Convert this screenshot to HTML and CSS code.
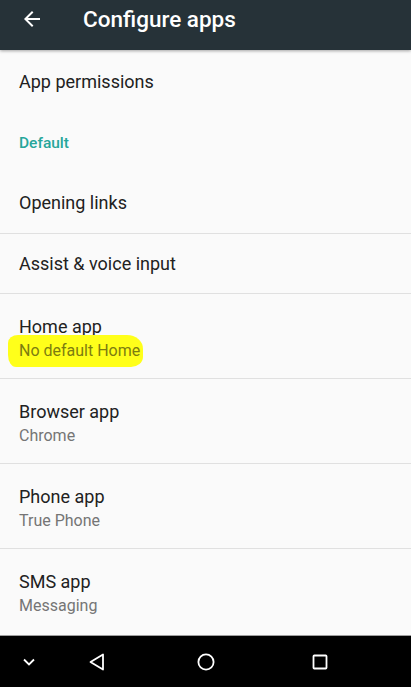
FILE: index.html
```html
<!DOCTYPE html>
<html lang="en">
<head>
  <meta charset="UTF-8">
  <meta name="viewport" content="width=device-width, initial-scale=1.0">
  <title>Configure apps</title>
  <link rel="stylesheet" href="styles.css">
</head>
<body>
  <div class="screen">
    <div class="toolbar">
      <svg class="back" width="24" height="24" viewBox="0 0 24 24">
        <path d="M20 11H7.83l5.59-5.59L12 4l-8 8 8 8 1.41-1.41L7.83 13H20v-2z" fill="#fff"/>
      </svg>
      <span class="title">Configure apps</span>
    </div>

    <div class="list">
      <div class="item first">
        <div class="item-title">App permissions</div>
      </div>
      <div class="category">Default</div>
      <div class="item single">
        <div class="item-title">Opening links</div>
      </div>
      <div class="item single divided">
        <div class="item-title">Assist &amp; voice input</div>
      </div>
      <div class="item double divided">
        <div class="item-title">Home app</div>
        <div class="item-sub"><span class="marker">No default Home</span></div>
      </div>
      <div class="item double divided">
        <div class="item-title">Browser app</div>
        <div class="item-sub">Chrome</div>
      </div>
      <div class="item double divided">
        <div class="item-title">Phone app</div>
        <div class="item-sub">True Phone</div>
      </div>
      <div class="item double divided">
        <div class="item-title">SMS app</div>
        <div class="item-sub">Messaging</div>
      </div>
    </div>

    <div class="navbar">
      <svg class="nav-down" width="14" height="10" viewBox="0 0 14 10">
        <path d="M2 2.5l5 5 5-5" fill="none" stroke="#fff" stroke-width="1.8"/>
      </svg>
      <svg class="nav-back" width="20" height="20" viewBox="0 0 20 20">
        <path d="M16 2.5v15L3.5 10z" fill="none" stroke="#fff" stroke-width="1.8" stroke-linejoin="round"/>
      </svg>
      <svg class="nav-home" width="20" height="20" viewBox="0 0 20 20">
        <circle cx="10" cy="10" r="7.6" fill="none" stroke="#fff" stroke-width="1.8"/>
      </svg>
      <svg class="nav-recent" width="20" height="20" viewBox="0 0 20 20">
        <rect x="3.5" y="3.5" width="13" height="13" rx="0.8" fill="none" stroke="#fff" stroke-width="1.8"/>
      </svg>
    </div>
  </div>
</body>
</html>
```

FILE: styles.css
```css
body {
  margin: 0;
  font-family: Roboto, "Noto Sans", Arial, sans-serif;
  background-color: #fafafa;
}
.screen {
  width: 411px;
  height: 687px;
  display: flex;
  flex-direction: column;
  overflow: hidden;
}
.toolbar {
  height: 50px;
  flex-shrink: 0;
  background-color: #263238;
  display: flex;
  align-items: flex-start;
  padding-top: 6px;
  box-sizing: border-box;
  box-shadow: 0 1px 3px rgba(0, 0, 0, 0.35);
  position: relative;
  z-index: 1;
}
.back {
  margin-left: 20px;
  margin-top: 1px;
}
.title {
  margin-left: 39px;
  color: #fff;
  font-size: 22.5px;
  font-weight: 500;
  line-height: 26px;
}
.list {
  flex: 1;
  overflow: hidden;
}
.item {
  padding: 0 19px;
  display: flex;
  flex-direction: column;
  justify-content: center;
  box-sizing: border-box;
}
.item.first {
  height: 63px;
}
.item.single {
  height: 60px;
}
.item.double {
  height: 85px;
  padding-top: 6px;
}
.divided {
  border-top: 1px solid #e0e0e0;
}
.item-title {
  font-size: 18px;
  color: #212121;
  line-height: 22px;
}
.item-sub {
  font-size: 16px;
  color: #757575;
  line-height: 22px;
  margin-top: 2px;
}
.category {
  height: 60px;
  padding: 0 19px;
  display: flex;
  align-items: center;
  font-size: 15.5px;
  font-weight: 500;
  color: #26a69a;
}
.marker {
  background-color: #ffff1a;
  color: #7c7c10;
  margin-left: -11px;
  padding: 6px 3px 7px 11px;
  border-radius: 10px 16px 12px 8px / 8px 14px 10px 12px;
}
.navbar {
  height: 51px;
  flex-shrink: 0;
  background-color: #000;
  position: relative;
  border-top: 1px solid #9e9e9e;
}
.navbar svg {
  position: absolute;
  top: 50%;
  transform: translate(-50%, -50%);
}
.nav-down { left: 29px; }
.nav-back { left: 97px; }
.nav-home { left: 206px; }
.nav-recent { left: 320px; }
```
